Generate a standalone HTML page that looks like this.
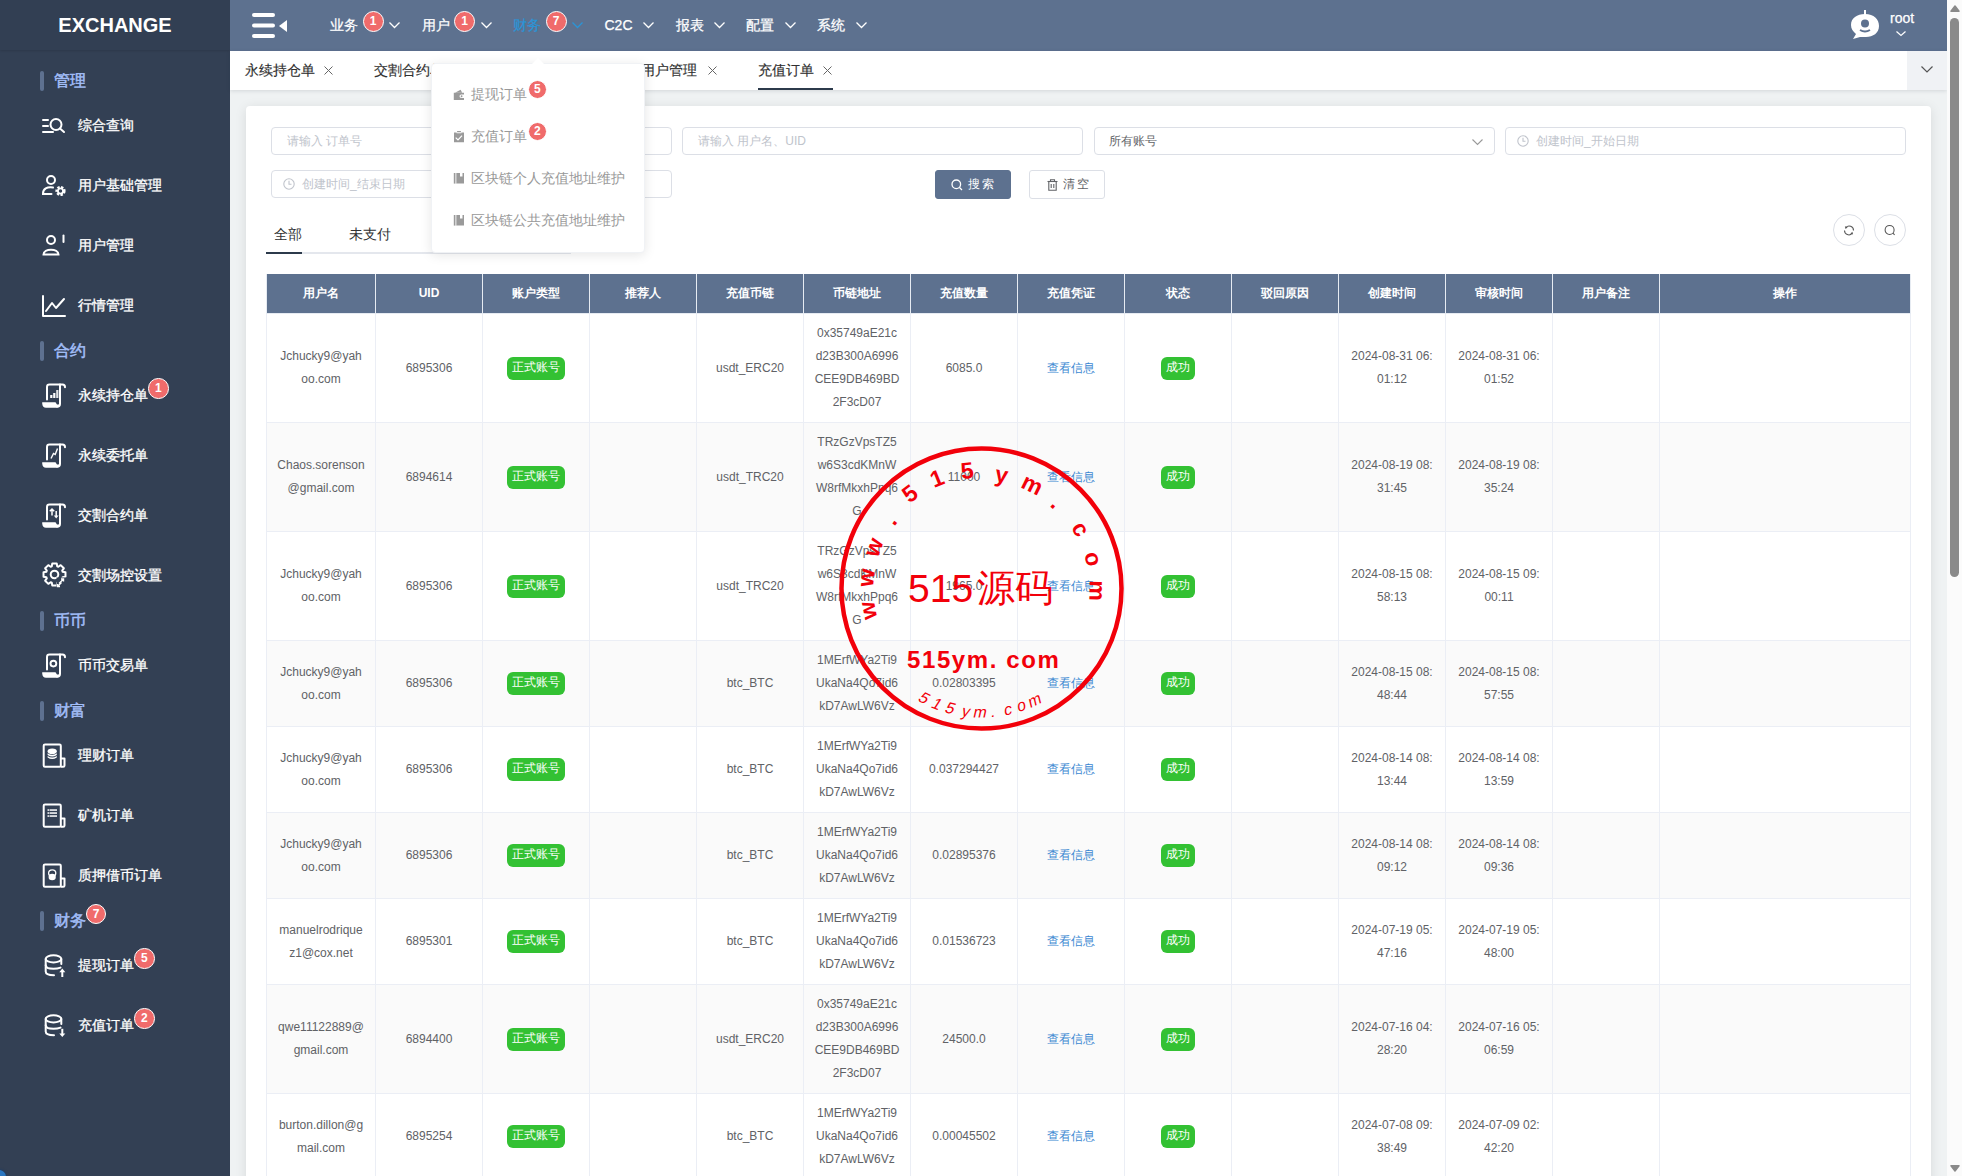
<!DOCTYPE html><html><head><meta charset="utf-8"><style>
*{box-sizing:border-box;margin:0;padding:0}
html,body{width:1962px;height:1176px;overflow:hidden;background:#eff2f3;font-family:"Liberation Sans",sans-serif;position:relative}
#side{position:absolute;left:0;top:0;width:230px;height:1176px;background:#334054;}
#logo{position:absolute;left:0;top:0;width:230px;height:50px;background:#323f53;box-shadow:0 1px 2px rgba(0,0,0,.12);color:#fff;font-weight:bold;font-size:20px;text-align:center;line-height:50px}
.sh{position:absolute;left:40px;width:120px;height:20px;color:#a0bcf8;font-size:16px;-webkit-text-stroke:0.5px #a3bff8;line-height:20px}
.sh:before{content:"";position:absolute;left:0;top:0;width:4px;height:20px;border-radius:2px;background:#5e7190}
.sh span{position:absolute;left:14px;top:0;white-space:nowrap}
.si{position:absolute;left:42px;width:180px;height:24px;color:#fff;font-size:14px;-webkit-text-stroke:0.3px #fff;line-height:24px;white-space:nowrap}
.si svg{position:absolute;left:0;top:0;overflow:visible}
.si span{position:absolute;left:36px;top:0}
.bdg{position:absolute;width:20px;height:20px;border-radius:50%;background:#f06b6b;border:1px solid #fff;color:#fff;font-size:12px;line-height:18px;text-align:center;font-weight:bold}
#hdr{position:absolute;left:230px;top:0;width:1717px;height:51px;background:#5d718f}
.nv{position:absolute;top:0;height:51px;color:#fff;font-size:14px;line-height:51px;white-space:nowrap;-webkit-text-stroke:0.25px currentColor}
.chev{position:absolute;overflow:visible}
#tabs{position:absolute;left:230px;top:51px;width:1717px;height:39px;background:#fff;box-shadow:0 1px 4px rgba(0,21,41,.12)}
.tb{position:absolute;top:0;height:39px;font-size:14px;color:#303030;line-height:39px;white-space:nowrap;-webkit-text-stroke:0.15px #303030}
#card{position:absolute;left:246px;top:106px;width:1685px;height:1100px;background:#fff;border-radius:4px;box-shadow:0 2px 12px 0 rgba(0,0,0,.1)}
#sb{position:absolute;left:1947px;top:0;width:15px;height:1176px;background:#fbfbfb}
.inp{position:absolute;height:28px;border:1px solid #dcdfe6;border-radius:4px;background:#fff;font-size:12px;color:#c0c4cc;line-height:27px;white-space:nowrap}
.btn{position:absolute;height:29px;border-radius:3px;font-size:12px;line-height:27px;text-align:center;letter-spacing:2px;white-space:nowrap}
.cbtn{position:absolute;width:32px;height:32px;border-radius:50%;border:1px solid #dcdfe6;background:#fff}
table{position:absolute;border-collapse:collapse;table-layout:fixed;font-size:12px;color:#606266}
td,th{border:1px solid #ebeef5;text-align:center;vertical-align:middle;word-break:break-all;line-height:23px}
th{background:#5d718f;color:#fff;font-weight:bold;height:39px;border-color:#e6ebf2;border-top:none}
td{padding:8px 10px}
tr.st td{background:#fafafa}
.tag{display:inline-block;height:23px;line-height:21px;padding:0 5px;border-radius:6px;background:#33c133;color:#fff;vertical-align:middle}
.lnk{color:#3d89d2}
.s1{position:relative;top:1px}
.m{display:inline-block;width:100%}
#dd{position:absolute;left:431px;top:63px;width:214px;height:190px;background:#fff;border-radius:4px;box-shadow:0 2px 12px rgba(0,0,0,.1);border:1px solid #f0f2f5}
.ddi{position:absolute;left:21px;height:20px;font-size:14px;color:#999;line-height:20px;white-space:nowrap}
</style></head><body>
<div id="side"><div id="logo">EXCHANGE</div>
<div class="sh" style="top:71px"><span>管理</span></div>
<div class="si" style="top:113px"><svg width="24" height="20" viewBox="0 0 24 20" style="top:4px"><g fill="none" stroke="#fff" stroke-width="2" stroke-linecap="round"><line x1="1" y1="3" x2="6" y2="3"/><line x1="1" y1="9" x2="6" y2="9"/><line x1="1" y1="15" x2="11" y2="15"/><circle cx="14" cy="7.5" r="5.5"/><line x1="18" y1="11.5" x2="22" y2="15"/></g></svg><span>综合查询</span></div>
<div class="si" style="top:173px"><svg width="24" height="22" viewBox="0 0 24 22" style="top:2px"><g fill="none" stroke="#fff" stroke-width="2" stroke-linecap="round"><circle cx="9" cy="5" r="4"/><path d="M11 12.5 C5 11.5 1 14 1 18.5 L1 19 L9.5 19"/></g><g transform="translate(18.5,16)"><circle r="3.8" fill="none" stroke="#fff" stroke-width="2.6" stroke-dasharray="2.2 1.4"/><circle r="2.6" fill="none" stroke="#fff" stroke-width="1.8"/></g></svg><span>用户基础管理</span></div>
<div class="si" style="top:233px"><svg width="24" height="22" viewBox="0 0 24 22" style="top:1px"><g fill="none" stroke="#fff" stroke-width="2" stroke-linecap="round"><circle cx="9" cy="6" r="4"/><path d="M1.5 20.5 C1.5 14 16.5 14 16.5 20.5 Z"/><line x1="21.5" y1="1.5" x2="21.5" y2="8"/></g></svg><span>用户管理</span></div>
<div class="si" style="top:293px"><svg width="24" height="22" viewBox="0 0 24 22" style="top:2px"><g fill="none" stroke="#fff" stroke-width="2" stroke-linecap="round" stroke-linejoin="round"><polyline points="1,1 1,21 23,21"/><polyline points="4,16 10,8 14,13 22,4"/></g></svg><span>行情管理</span></div>
<div class="sh" style="top:341px"><span>合约</span></div>
<div class="si" style="top:383px"><svg width="24" height="26" viewBox="0 0 24 26" style="top:0"><g fill="none" stroke="#fff" stroke-width="2" stroke-linecap="round"><path d="M5 16.5 V4 Q5 1.6 7.5 1.6 H20.5 Q23 1.6 23 4.3"/><path d="M18 1.6 V20.8 Q18 23.8 15 23.8"/></g><path d="M0.2 19.2 H13.5 L15 21.6 H17.2 V22 Q17 24.8 14 24.8 H4 Q0.6 24.8 0.2 20.5 Z" fill="#fff"/><g fill="#fff"><rect x="8.2" y="12" width="2.2" height="3"/><rect x="11.2" y="10" width="2.2" height="5"/><rect x="14.2" y="7" width="2.2" height="8" opacity=".85"/></g></svg><span>永续持仓单</span></div>
<div class="bdg" style="left:148.15px;top:378.45px;width:20.5px;height:20.5px;line-height:18.5px">1</div>
<div class="si" style="top:443px"><svg width="24" height="26" viewBox="0 0 24 26" style="top:0"><g fill="none" stroke="#fff" stroke-width="2" stroke-linecap="round"><path d="M5 16.5 V4 Q5 1.6 7.5 1.6 H20.5 Q23 1.6 23 4.3"/><path d="M18 1.6 V20.8 Q18 23.8 15 23.8"/></g><path d="M0.2 19.2 H13.5 L15 21.6 H17.2 V22 Q17 24.8 14 24.8 H4 Q0.6 24.8 0.2 20.5 Z" fill="#fff"/><polyline points="9,15.5 11.5,10.5 13.2,11.5 15.5,5.5" fill="none" stroke="#fff" stroke-width="1.4"/></svg><span>永续委托单</span></div>
<div class="si" style="top:503px"><svg width="24" height="26" viewBox="0 0 24 26" style="top:0"><g fill="none" stroke="#fff" stroke-width="2" stroke-linecap="round"><path d="M5 16.5 V4 Q5 1.6 7.5 1.6 H20.5 Q23 1.6 23 4.3"/><path d="M18 1.6 V20.8 Q18 23.8 15 23.8"/></g><path d="M0.2 19.2 H13.5 L15 21.6 H17.2 V22 Q17 24.8 14 24.8 H4 Q0.6 24.8 0.2 20.5 Z" fill="#fff"/><g fill="none" stroke="#fff" stroke-width="1.5"><path d="M10 12.5 V6 M7.8 8.2 L10 6 L12.2 8.2"/></g><path d="M14.2 8 V13" stroke="#fff" stroke-width="1.5"/><path d="M11.8 12.5 H16.6 L14.2 15.5Z" fill="#fff"/></svg><span>交割合约单</span></div>
<div class="si" style="top:563px"><svg width="26" height="26" viewBox="0 0 26 26" style="top:-1px"><path d="M20.66 9.77 L23.48 10.27 L23.48 14.73 L20.66 15.23 L20.20 16.34 L21.84 18.68 L18.68 21.84 L16.34 20.20 L15.23 20.66 L14.73 23.48 L10.27 23.48 L9.77 20.66 L8.66 20.20 L6.32 21.84 L3.16 18.68 L4.80 16.34 L4.34 15.23 L1.52 14.73 L1.52 10.27 L4.34 9.77 L4.80 8.66 L3.16 6.32 L6.32 3.16 L8.66 4.80 L9.77 4.34 L10.27 1.52 L14.73 1.52 L15.23 4.34 L16.34 4.80 L18.68 3.16 L21.84 6.32 L20.20 8.66Z" fill="none" stroke="#fff" stroke-width="2" stroke-linejoin="round"/><circle cx="12.5" cy="12.5" r="3.8" fill="none" stroke="#fff" stroke-width="2"/><rect x="14.5" y="15.5" width="12" height="11" fill="#334054"/><g stroke="#fff" stroke-width="1.4" fill="none"><path d="M17 21.5 L21.5 17 M19 17 H21.5 V19.5"/><path d="M15.5 24.5 L19.5 20.5 M15.5 22 V24.5 H18"/></g></svg><span>交割场控设置</span></div>
<div class="sh" style="top:611px"><span>币币</span></div>
<div class="si" style="top:653px"><svg width="24" height="26" viewBox="0 0 24 26" style="top:0"><g fill="none" stroke="#fff" stroke-width="2" stroke-linecap="round"><path d="M5 16.5 V4 Q5 1.6 7.5 1.6 H20.5 Q23 1.6 23 4.3"/><path d="M18 1.6 V20.8 Q18 23.8 15 23.8"/></g><path d="M0.2 19.2 H13.5 L15 21.6 H17.2 V22 Q17 24.8 14 24.8 H4 Q0.6 24.8 0.2 20.5 Z" fill="#fff"/><circle cx="11.4" cy="10.6" r="2.9" fill="none" stroke="#fff" stroke-width="1.9"/></svg><span>币币交易单</span></div>
<div class="sh" style="top:701px"><span>财富</span></div>
<div class="si" style="top:743px"><svg width="26" height="26" viewBox="0 0 26 26" style="top:0"><g fill="none" stroke="#fff" stroke-width="2" stroke-linejoin="round"><path d="M3 1.5 H17.5 Q18.8 1.5 18.8 2.8 V22.5 Q18.8 23.8 17.5 23.8 H3 Q1.7 23.8 1.7 22.5 V2.8 Q1.7 1.5 3 1.5 Z"/><path d="M18.8 15.5 H22.5 V22.5 Q22.5 23.8 21.2 23.8 H18.8"/></g><g fill="#fff"><ellipse cx="10.2" cy="8.2" rx="4.6" ry="2.8"/><path d="M5.6 10.2 Q10.2 13.2 14.8 10.2 V12 Q10.2 15 5.6 12Z"/><path d="M5.6 13 Q10.2 16 14.8 13 V14.5 Q10.2 17.5 5.6 14.5Z"/></g></svg><span>理财订单</span></div>
<div class="si" style="top:803px"><svg width="26" height="26" viewBox="0 0 26 26" style="top:0"><g fill="none" stroke="#fff" stroke-width="2" stroke-linejoin="round"><path d="M3 1.5 H17.5 Q18.8 1.5 18.8 2.8 V22.5 Q18.8 23.8 17.5 23.8 H3 Q1.7 23.8 1.7 22.5 V2.8 Q1.7 1.5 3 1.5 Z"/><path d="M18.8 15.5 H22.5 V22.5 Q22.5 23.8 21.2 23.8 H18.8"/></g><g fill="#fff"><rect x="5.5" y="6.3" width="1.5" height="1.5"/><rect x="5.5" y="9.3" width="1.5" height="1.5"/><rect x="5.5" y="12.3" width="1.5" height="1.5"/><rect x="7.5" y="6.3" width="7.5" height="1.5"/><rect x="7.5" y="9.3" width="7.5" height="1.5"/><rect x="7.5" y="12.3" width="7.5" height="1.5"/></g></svg><span>矿机订单</span></div>
<div class="si" style="top:863px"><svg width="26" height="26" viewBox="0 0 26 26" style="top:0"><g fill="none" stroke="#fff" stroke-width="2" stroke-linejoin="round"><path d="M3 1.5 H17.5 Q18.8 1.5 18.8 2.8 V22.5 Q18.8 23.8 17.5 23.8 H3 Q1.7 23.8 1.7 22.5 V2.8 Q1.7 1.5 3 1.5 Z"/><path d="M18.8 15.5 H22.5 V22.5 Q22.5 23.8 21.2 23.8 H18.8"/></g><g fill="#fff"><ellipse cx="10.2" cy="10" rx="3.6" ry="3.2" fill="none" stroke="#fff" stroke-width="1.3"/><ellipse cx="10.2" cy="14" rx="3.6" ry="3.2"/></g></svg><span>质押借币订单</span></div>
<div class="sh" style="top:911px"><span>财务</span></div>
<div class="bdg" style="left:85.75px;top:903.75px;width:20.5px;height:20.5px;line-height:18.5px">7</div>
<div class="si" style="top:953px"><svg width="24" height="26" viewBox="0 0 24 26" style="top:0"><g fill="none" stroke="#fff" stroke-width="2" stroke-linecap="round"><ellipse cx="11.5" cy="5.9" rx="7.8" ry="3.6"/><path d="M3.7 5.9 V18.5 Q3.7 22.2 12 22.2"/><path d="M3.7 12.3 Q3.7 15.8 11.5 15.8 Q15.5 15.8 18.5 14.6"/><path d="M19.3 5.9 V11"/></g><path d="M20.3 24 V18" stroke="#fff" stroke-width="2"/><path d="M17.3 19.2 L20.3 15.6 L23.3 19.2Z" fill="#fff"/></svg><span>提现订单</span></div>
<div class="bdg" style="left:134.15px;top:948.45px;width:20.5px;height:20.5px;line-height:18.5px">5</div>
<div class="si" style="top:1013px"><svg width="24" height="26" viewBox="0 0 24 26" style="top:0"><g fill="none" stroke="#fff" stroke-width="2" stroke-linecap="round"><ellipse cx="11.5" cy="5.9" rx="7.8" ry="3.6"/><path d="M3.7 5.9 V18.5 Q3.7 22.2 12 22.2"/><path d="M3.7 12.3 Q3.7 15.8 11.5 15.8 Q15.5 15.8 18.5 14.6"/><path d="M19.3 5.9 V11"/></g><path d="M20.3 15.8 V21" stroke="#fff" stroke-width="2"/><path d="M17.3 20.4 L20.3 24 L23.3 20.4Z" fill="#fff"/></svg><span>充值订单</span></div>
<div class="bdg" style="left:134.15px;top:1008.45px;width:20.5px;height:20.5px;line-height:18.5px">2</div>
<div style="position:absolute;left:-8px;top:1170px;width:14px;height:14px;border-radius:50%;background:#2a76c0;box-shadow:0 0 2px 1px rgba(20,60,110,.5)"></div>
</div>
<div id="hdr">
<svg style="position:absolute;left:22px;top:12px" width="36" height="28" viewBox="0 0 36 28"><g stroke="#fff" stroke-width="4" stroke-linecap="round"><line x1="2" y1="3" x2="21" y2="3"/><line x1="2" y1="13.5" x2="21" y2="13.5"/><line x1="2" y1="24" x2="21" y2="24"/></g><path d="M35 8 V20 L27 14 Z" fill="#fff"/></svg>
<div class="nv" style="left:100px;color:#fff">业务</div>
<div class="bdg" style="left:132.5px;top:11.3px;width:21px;height:21px;line-height:19px">1</div>
<svg class="chev" style="left:159px;top:21.5px" width="11" height="6" viewBox="0 0 11 6"><polyline points="0.5,0.5 5.5,5.5 10.5,0.5" fill="none" stroke="#fff" stroke-width="1.3"/></svg>
<div class="nv" style="left:191.5px;color:#fff">用户</div>
<div class="bdg" style="left:224.0px;top:11.3px;width:21px;height:21px;line-height:19px">1</div>
<svg class="chev" style="left:250.5px;top:21.5px" width="11" height="6" viewBox="0 0 11 6"><polyline points="0.5,0.5 5.5,5.5 10.5,0.5" fill="none" stroke="#fff" stroke-width="1.3"/></svg>
<div class="nv" style="left:283px;color:#2b94d6">财务</div>
<div class="bdg" style="left:315.5px;top:11.3px;width:21px;height:21px;line-height:19px">7</div>
<svg class="chev" style="left:342px;top:21.5px" width="11" height="6" viewBox="0 0 11 6"><polyline points="0.5,0.5 5.5,5.5 10.5,0.5" fill="none" stroke="#2b94d6" stroke-width="1.3"/></svg>
<div class="nv" style="left:374.5px;color:#fff">C2C</div>
<svg class="chev" style="left:413.0px;top:21.5px" width="11" height="6" viewBox="0 0 11 6"><polyline points="0.5,0.5 5.5,5.5 10.5,0.5" fill="none" stroke="#fff" stroke-width="1.3"/></svg>
<div class="nv" style="left:445.5px;color:#fff">报表</div>
<svg class="chev" style="left:484.0px;top:21.5px" width="11" height="6" viewBox="0 0 11 6"><polyline points="0.5,0.5 5.5,5.5 10.5,0.5" fill="none" stroke="#fff" stroke-width="1.3"/></svg>
<div class="nv" style="left:516px;color:#fff">配置</div>
<svg class="chev" style="left:554.5px;top:21.5px" width="11" height="6" viewBox="0 0 11 6"><polyline points="0.5,0.5 5.5,5.5 10.5,0.5" fill="none" stroke="#fff" stroke-width="1.3"/></svg>
<div class="nv" style="left:587px;color:#fff">系统</div>
<svg class="chev" style="left:625.5px;top:21.5px" width="11" height="6" viewBox="0 0 11 6"><polyline points="0.5,0.5 5.5,5.5 10.5,0.5" fill="none" stroke="#fff" stroke-width="1.3"/></svg>
<svg style="position:absolute;left:1620px;top:9px" width="32" height="32" viewBox="0 0 32 32"><line x1="15" y1="1" x2="15" y2="6" stroke="#fff" stroke-width="2"/><path d="M15 5 C24 5 29 10 29 17 C29 24 23 28 16 28 L10 28 L3 30 L6 25 C3 22 1 20 1 16 C1 9 7 5 15 5 Z" fill="#fff"/><circle cx="15" cy="14.5" r="4" fill="#5d718f"/><path d="M10 21 q5 3 10 0" stroke="#5d718f" stroke-width="2" fill="none"/></svg>
<div class="nv" style="left:1660px;top:-7px;font-size:14px">root</div>
<svg class="chev" style="left:1665.5px;top:31px" width="10" height="5" viewBox="0 0 10 5"><polyline points="0.5,0.5 5.0,4.5 9.5,0.5" fill="none" stroke="#fff" stroke-width="1.2"/></svg>
</div>
<div id="tabs">
<div class="tb" style="left:15px">永续持仓单</div>
<svg style="position:absolute;left:93.5px;top:15px" width="9" height="9" viewBox="0 0 9 9"><g stroke="#666" stroke-width="1"><line x1="0.5" y1="0.5" x2="8.5" y2="8.5"/><line x1="8.5" y1="0.5" x2="0.5" y2="8.5"/></g></svg>
<div class="tb" style="left:144px">交割合约单</div>
<svg style="position:absolute;left:222.5px;top:15px" width="9" height="9" viewBox="0 0 9 9"><g stroke="#666" stroke-width="1"><line x1="0.5" y1="0.5" x2="8.5" y2="8.5"/><line x1="8.5" y1="0.5" x2="0.5" y2="8.5"/></g></svg>
<div class="tb" style="left:272.5px">交割场控设置</div>
<svg style="position:absolute;left:365.0px;top:15px" width="9" height="9" viewBox="0 0 9 9"><g stroke="#666" stroke-width="1"><line x1="0.5" y1="0.5" x2="8.5" y2="8.5"/><line x1="8.5" y1="0.5" x2="0.5" y2="8.5"/></g></svg>
<div class="tb" style="left:411px">用户管理</div>
<svg style="position:absolute;left:477.5px;top:15px" width="9" height="9" viewBox="0 0 9 9"><g stroke="#666" stroke-width="1"><line x1="0.5" y1="0.5" x2="8.5" y2="8.5"/><line x1="8.5" y1="0.5" x2="0.5" y2="8.5"/></g></svg>
<div class="tb" style="left:528px">充值订单</div>
<svg style="position:absolute;left:592.5px;top:15px" width="9" height="9" viewBox="0 0 9 9"><g stroke="#666" stroke-width="1"><line x1="0.5" y1="0.5" x2="8.5" y2="8.5"/><line x1="8.5" y1="0.5" x2="0.5" y2="8.5"/></g></svg>
<div style="position:absolute;left:528px;top:37px;width:75px;height:2px;background:#2c3a4b"></div>
<div style="position:absolute;left:1677px;top:0;width:40px;height:39px;background:#f0f2f5"></div>
<svg class="chev" style="left:1691px;top:15px" width="12" height="6.5" viewBox="0 0 12 6.5"><polyline points="0.5,0.5 6.0,6.0 11.5,0.5" fill="none" stroke="#555" stroke-width="1.2"/></svg>
</div>
<div id="card"></div>
<div class="inp" style="left:271px;top:127px;width:401px"><span style="position:absolute;left:15px">请输入 订单号</span></div>
<div class="inp" style="left:682px;top:127px;width:401px"><span style="position:absolute;left:15px">请输入 用户名、UID</span></div>
<div class="inp" style="left:1094px;top:127px;width:401px;color:#606266"><span style="position:absolute;left:14px">所有账号</span></div>
<svg class="chev" style="left:1472px;top:138.5px" width="11" height="6" viewBox="0 0 11 6"><polyline points="0.5,0.5 5.5,5.5 10.5,0.5" fill="none" stroke="#999" stroke-width="1.1"/></svg>
<div class="inp" style="left:1505px;top:127px;width:401px"><span style="position:absolute;left:30px">创建时间_开始日期</span></div>
<svg style="position:absolute;left:1517px;top:135px" width="12" height="12" viewBox="0 0 12 12"><g fill="none" stroke="#c0c4cc" stroke-width="1.1"><circle cx="6" cy="6" r="5.2"/><polyline points="6,2.8 6,6.2 8.5,6.2"/></g></svg>
<div class="inp" style="left:271px;top:170px;width:401px"><span style="position:absolute;left:30px">创建时间_结束日期</span></div>
<svg style="position:absolute;left:283px;top:178px" width="12" height="12" viewBox="0 0 12 12"><g fill="none" stroke="#c0c4cc" stroke-width="1.1"><circle cx="6" cy="6" r="5.2"/><polyline points="6,2.8 6,6.2 8.5,6.2"/></g></svg>
<div class="btn" style="left:935px;top:170px;width:76px;background:#5d718f;color:#fff;border:1px solid #5d718f"><svg style="position:absolute;left:15px;top:8px" width="12" height="12" viewBox="0 0 12 12"><g fill="none" stroke="#fff" stroke-width="1.3"><circle cx="5.3" cy="5.3" r="4.3"/><line x1="8.5" y1="8.5" x2="11" y2="11"/></g></svg><span style="position:absolute;left:32px">搜索</span></div>
<div class="btn" style="left:1029px;top:170px;width:76px;background:#fff;color:#606266;border:1px solid #dcdfe6"><svg style="position:absolute;left:17px;top:8px" width="11" height="12" viewBox="0 0 11 12"><g fill="none" stroke="#606266" stroke-width="1.1"><line x1="0.5" y1="2.5" x2="10.5" y2="2.5"/><path d="M3.5 2.5 V0.8 H7.5 V2.5"/><path d="M1.8 2.5 V11.3 H9.2 V2.5"/><line x1="4.2" y1="5" x2="4.2" y2="9"/><line x1="6.8" y1="5" x2="6.8" y2="9"/></g></svg><span style="position:absolute;left:33px">清空</span></div>
<div style="position:absolute;left:266px;top:252px;width:305px;height:2px;background:#e4e7ed"></div>
<div style="position:absolute;left:266px;top:252px;width:36px;height:2px;background:#2c3a4b"></div>
<div style="position:absolute;left:274px;top:224px;font-size:14px;color:#303133;line-height:20px">全部</div>
<div style="position:absolute;left:349px;top:224px;font-size:14px;color:#303133;line-height:20px">未支付</div>
<div class="cbtn" style="left:1833px;top:214px"><svg style="position:absolute;left:9px;top:9px" width="12" height="12" viewBox="0 0 12 12"><g fill="none" stroke="#555" stroke-width="1.05"><path d="M2.9 3.6 A4.3 4.3 0 0 1 10.5 6.4"/><path d="M1.5 6.4 A4.3 4.3 0 0 0 9.1 9.3"/></g><path d="M1.9 2.2 L4.6 3.2 L2.6 5.1Z" fill="#555"/><path d="M10.1 10.6 L7.4 9.6 L9.4 7.7Z" fill="#555"/></svg></div>
<div class="cbtn" style="left:1874px;top:214px"><svg style="position:absolute;left:9px;top:9px" width="12" height="12" viewBox="0 0 12 12"><g fill="none" stroke="#555" stroke-width="1.05"><circle cx="5.6" cy="5.9" r="4.5"/><line x1="8.9" y1="9.2" x2="10.6" y2="10.9"/></g></svg></div>
<table style="left:266px;top:274px;width:1644px">
<colgroup><col style="width:109px"><col style="width:107px"><col style="width:107px"><col style="width:107px"><col style="width:107px"><col style="width:107px"><col style="width:107px"><col style="width:107px"><col style="width:107px"><col style="width:107px"><col style="width:107px"><col style="width:107px"><col style="width:107px"><col style="width:251px"></colgroup>
<tr><th>用户名</th><th>UID</th><th>账户类型</th><th>推荐人</th><th>充值币链</th><th>币链地址</th><th>充值数量</th><th>充值凭证</th><th>状态</th><th>驳回原因</th><th>创建时间</th><th>审核时间</th><th>用户备注</th><th>操作</th></tr>
<tr><td><span class="m">Jchucky9@yahoo.com</span></td><td><span class="x s1">6895306</span></td><td><span class="tag s1">正式账号</span></td><td></td><td><span class="x s1">usdt_ERC20</span></td><td>0x35749aE21cd23B300A6996CEE9DB469BD2F3cD07</td><td><span class="x s1">6085.0</span></td><td><span class="lnk s1">查看信息</span></td><td><span class="tag s1">成功</span></td><td></td><td><span class="m">2024-08-31 06:01:12</span></td><td><span class="m">2024-08-31 06:01:52</span></td><td></td><td></td></tr>
<tr class="st"><td><span class="m">Chaos.sorenson@gmail.com</span></td><td><span class="x s1">6894614</span></td><td><span class="tag s1">正式账号</span></td><td></td><td><span class="x s1">usdt_TRC20</span></td><td>TRzGzVpsTZ5w6S3cdKMnWW8rfMkxhPpq6G</td><td><span class="x s1">11000</span></td><td><span class="lnk s1">查看信息</span></td><td><span class="tag s1">成功</span></td><td></td><td><span class="m">2024-08-19 08:31:45</span></td><td><span class="m">2024-08-19 08:35:24</span></td><td></td><td></td></tr>
<tr><td><span class="m">Jchucky9@yahoo.com</span></td><td><span class="x s1">6895306</span></td><td><span class="tag s1">正式账号</span></td><td></td><td><span class="x s1">usdt_TRC20</span></td><td>TRzGzVpsTZ5w6S3cdKMnWW8rfMkxhPpq6G</td><td><span class="x s1">1965.0</span></td><td><span class="lnk s1">查看信息</span></td><td><span class="tag s1">成功</span></td><td></td><td><span class="m">2024-08-15 08:58:13</span></td><td><span class="m">2024-08-15 09:00:11</span></td><td></td><td></td></tr>
<tr class="st"><td><span class="m s1">Jchucky9@yahoo.com</span></td><td><span class="x">6895306</span></td><td><span class="tag">正式账号</span></td><td></td><td><span class="x">btc_BTC</span></td><td>1MErfWYa2Ti9UkaNa4Qo7id6kD7AwLW6Vz</td><td><span class="x">0.02803395</span></td><td><span class="lnk">查看信息</span></td><td><span class="tag">成功</span></td><td></td><td><span class="m s1">2024-08-15 08:48:44</span></td><td><span class="m s1">2024-08-15 08:57:55</span></td><td></td><td></td></tr>
<tr><td><span class="m s1">Jchucky9@yahoo.com</span></td><td><span class="x">6895306</span></td><td><span class="tag">正式账号</span></td><td></td><td><span class="x">btc_BTC</span></td><td>1MErfWYa2Ti9UkaNa4Qo7id6kD7AwLW6Vz</td><td><span class="x">0.037294427</span></td><td><span class="lnk">查看信息</span></td><td><span class="tag">成功</span></td><td></td><td><span class="m s1">2024-08-14 08:13:44</span></td><td><span class="m s1">2024-08-14 08:13:59</span></td><td></td><td></td></tr>
<tr class="st"><td><span class="m s1">Jchucky9@yahoo.com</span></td><td><span class="x">6895306</span></td><td><span class="tag">正式账号</span></td><td></td><td><span class="x">btc_BTC</span></td><td>1MErfWYa2Ti9UkaNa4Qo7id6kD7AwLW6Vz</td><td><span class="x">0.02895376</span></td><td><span class="lnk">查看信息</span></td><td><span class="tag">成功</span></td><td></td><td><span class="m s1">2024-08-14 08:09:12</span></td><td><span class="m s1">2024-08-14 08:09:36</span></td><td></td><td></td></tr>
<tr><td><span class="m s1">manuelrodriquez1@cox.net</span></td><td><span class="x">6895301</span></td><td><span class="tag">正式账号</span></td><td></td><td><span class="x">btc_BTC</span></td><td>1MErfWYa2Ti9UkaNa4Qo7id6kD7AwLW6Vz</td><td><span class="x">0.01536723</span></td><td><span class="lnk">查看信息</span></td><td><span class="tag">成功</span></td><td></td><td><span class="m s1">2024-07-19 05:47:16</span></td><td><span class="m s1">2024-07-19 05:48:00</span></td><td></td><td></td></tr>
<tr class="st"><td><span class="m">qwe11122889@gmail.com</span></td><td><span class="x s1">6894400</span></td><td><span class="tag s1">正式账号</span></td><td></td><td><span class="x s1">usdt_ERC20</span></td><td>0x35749aE21cd23B300A6996CEE9DB469BD2F3cD07</td><td><span class="x s1">24500.0</span></td><td><span class="lnk s1">查看信息</span></td><td><span class="tag s1">成功</span></td><td></td><td><span class="m">2024-07-16 04:28:20</span></td><td><span class="m">2024-07-16 05:06:59</span></td><td></td><td></td></tr>
<tr><td><span class="m s1">burton.dillon@gmail.com</span></td><td><span class="x">6895254</span></td><td><span class="tag">正式账号</span></td><td></td><td><span class="x">btc_BTC</span></td><td>1MErfWYa2Ti9UkaNa4Qo7id6kD7AwLW6Vz</td><td><span class="x">0.00045502</span></td><td><span class="lnk">查看信息</span></td><td><span class="tag">成功</span></td><td></td><td><span class="m s1">2024-07-08 09:38:49</span></td><td><span class="m s1">2024-07-09 02:42:20</span></td><td></td><td></td></tr>
</table>
<div id="dd">
<svg style="position:absolute;left:99px;top:-6px" width="14" height="7" viewBox="0 0 14 7"><path d="M0 7 L7 0 L14 7 Z" fill="#fff"/></svg>
<div style="position:absolute;left:20.5px;top:23px;width:12px;height:12px"><svg width="12" height="12" viewBox="0 0 12 12"><path d="M2 3.8 L7.6 0.7 L9.2 3.8Z" fill="#9a9a9a"/><path d="M0.8 3.8 H11 V5.5 H8.2 Q6.5 5.5 6.5 7.25 Q6.5 9 8.2 9 H11 V10.9 H0.8Z" fill="#9a9a9a"/><circle cx="8.6" cy="7.25" r="0.9" fill="#9a9a9a"/></svg></div>
<div class="ddi" style="left:38.5px;top:20px">提现订单</div>
<div class="bdg" style="left:95.79999999999995px;top:16.0px;width:19px;height:19px;line-height:17px">5</div>
<div style="position:absolute;left:20.5px;top:65px;width:12px;height:12px"><svg width="12" height="12" viewBox="0 0 12 12"><path d="M1 1.4 H3.6 V2.3 H8.4 V1.4 H11 V11.2 H1Z" fill="#9a9a9a"/><rect x="4" y="0" width="4" height="1.2" rx="0.5" fill="#9a9a9a"/><polyline points="2.7,6.7 5,9 9,4.7" fill="none" stroke="#fff" stroke-width="1.2"/></svg></div>
<div class="ddi" style="left:38.5px;top:62px">充值订单</div>
<div class="bdg" style="left:95.79999999999995px;top:58.0px;width:19px;height:19px;line-height:17px">2</div>
<div style="position:absolute;left:20.5px;top:107px;width:12px;height:12px"><svg width="12" height="12" viewBox="0 0 12 12"><rect x="0.8" y="0" width="1.3" height="10.6" fill="#9a9a9a"/><rect x="2.1" y="0" width="1.3" height="10.6" fill="#cfcfcf"/><path d="M3.4 0 H7 V3.5 H9.5 V0 H11 V10.6 H3.4Z" fill="#9a9a9a"/></svg></div>
<div class="ddi" style="left:38.5px;top:104px">区块链个人充值地址维护</div>
<div style="position:absolute;left:20.5px;top:149px;width:12px;height:12px"><svg width="12" height="12" viewBox="0 0 12 12"><rect x="0.8" y="0" width="1.3" height="10.6" fill="#9a9a9a"/><rect x="2.1" y="0" width="1.3" height="10.6" fill="#cfcfcf"/><path d="M3.4 0 H7 V3.5 H9.5 V0 H11 V10.6 H3.4Z" fill="#9a9a9a"/></svg></div>
<div class="ddi" style="left:38.5px;top:146px">区块链公共充值地址维护</div>
</div>
<div id="sb"><svg style="position:absolute;left:2.5px;top:5px" width="10" height="7" viewBox="0 0 10 7"><path d="M1 6.2 L5 1 L9 6.2Z" fill="#8a8a8a" stroke="#8a8a8a" stroke-width="1.5" stroke-linejoin="round"/></svg><div style="position:absolute;left:3px;top:18px;width:9px;height:559px;border-radius:4.5px;background:#8a8a8a"></div><svg style="position:absolute;left:2.5px;top:1165px" width="10" height="7" viewBox="0 0 10 7"><path d="M1 0.8 L5 6 L9 0.8Z" fill="#8a8a8a" stroke="#8a8a8a" stroke-width="1.5" stroke-linejoin="round"/></svg></div>
<svg style="position:absolute;left:0;top:0;pointer-events:none" width="1962" height="1176" viewBox="0 0 1962 1176"><circle cx="981.5" cy="588.6" r="140" fill="none" stroke="#f2000a" stroke-width="4.5"/><text x="0" y="0" transform="translate(867.6,610.7) rotate(259)" text-anchor="middle" dominant-baseline="central" font-family="Liberation Sans" font-weight="bold" font-size="23" fill="#f2000a">w</text><text x="0" y="0" transform="translate(866.0,577.5) rotate(275.5)" text-anchor="middle" dominant-baseline="central" font-family="Liberation Sans" font-weight="bold" font-size="23" fill="#f2000a">w</text><text x="0" y="0" transform="translate(873.2,547.0) rotate(291)" text-anchor="middle" dominant-baseline="central" font-family="Liberation Sans" font-weight="bold" font-size="23" fill="#f2000a">w</text><text x="0" y="0" transform="translate(889.7,519.4) rotate(307)" text-anchor="middle" dominant-baseline="central" font-family="Liberation Sans" font-weight="bold" font-size="23" fill="#f2000a">.</text><text x="0" y="0" transform="translate(909.9,493.6) rotate(323)" text-anchor="middle" dominant-baseline="central" font-family="Liberation Sans" font-weight="bold" font-size="23" fill="#f2000a">5</text><text x="0" y="0" transform="translate(936.9,478.3) rotate(338)" text-anchor="middle" dominant-baseline="central" font-family="Liberation Sans" font-weight="bold" font-size="23" fill="#f2000a">1</text><text x="0" y="0" transform="translate(967.0,470.5) rotate(353)" text-anchor="middle" dominant-baseline="central" font-family="Liberation Sans" font-weight="bold" font-size="23" fill="#f2000a">5</text><text x="0" y="0" transform="translate(1001.6,474.4) rotate(370)" text-anchor="middle" dominant-baseline="central" font-family="Liberation Sans" font-weight="bold" font-size="23" fill="#f2000a">y</text><text x="0" y="0" transform="translate(1032.4,484.3) rotate(386)" text-anchor="middle" dominant-baseline="central" font-family="Liberation Sans" font-weight="bold" font-size="23" fill="#f2000a">m</text><text x="0" y="0" transform="translate(1056.9,501.8) rotate(401)" text-anchor="middle" dominant-baseline="central" font-family="Liberation Sans" font-weight="bold" font-size="23" fill="#f2000a">.</text><text x="0" y="0" transform="translate(1080.9,528.9) rotate(419)" text-anchor="middle" dominant-baseline="central" font-family="Liberation Sans" font-weight="bold" font-size="23" fill="#f2000a">c</text><text x="0" y="0" transform="translate(1093.5,558.6) rotate(435)" text-anchor="middle" dominant-baseline="central" font-family="Liberation Sans" font-weight="bold" font-size="23" fill="#f2000a">o</text><text x="0" y="0" transform="translate(1097.5,590.6) rotate(451)" text-anchor="middle" dominant-baseline="central" font-family="Liberation Sans" font-weight="bold" font-size="23" fill="#f2000a">m</text><text x="0" y="0" transform="translate(924.7,697.7) rotate(27.5) skewX(-12)" text-anchor="middle" dominant-baseline="central" font-family="Liberation Sans" font-size="16" fill="#f2000a">5</text><text x="0" y="0" transform="translate(937.4,703.4) rotate(21) skewX(-12)" text-anchor="middle" dominant-baseline="central" font-family="Liberation Sans" font-size="16" fill="#f2000a">1</text><text x="0" y="0" transform="translate(950.7,707.7) rotate(14.5) skewX(-12)" text-anchor="middle" dominant-baseline="central" font-family="Liberation Sans" font-size="16" fill="#f2000a">5</text><text x="0" y="0" transform="translate(966.5,710.7) rotate(7) skewX(-12)" text-anchor="middle" dominant-baseline="central" font-family="Liberation Sans" font-size="16" fill="#f2000a">y</text><text x="0" y="0" transform="translate(980.4,711.6) rotate(0.5) skewX(-12)" text-anchor="middle" dominant-baseline="central" font-family="Liberation Sans" font-size="16" fill="#f2000a">m</text><text x="0" y="0" transform="translate(993.3,711.0) rotate(-5.5) skewX(-12)" text-anchor="middle" dominant-baseline="central" font-family="Liberation Sans" font-size="16" fill="#f2000a">.</text><text x="0" y="0" transform="translate(1008.1,708.7) rotate(-12.5) skewX(-12)" text-anchor="middle" dominant-baseline="central" font-family="Liberation Sans" font-size="16" fill="#f2000a">c</text><text x="0" y="0" transform="translate(1021.5,704.9) rotate(-19) skewX(-12)" text-anchor="middle" dominant-baseline="central" font-family="Liberation Sans" font-size="16" fill="#f2000a">o</text><text x="0" y="0" transform="translate(1034.5,699.6) rotate(-25.5) skewX(-12)" text-anchor="middle" dominant-baseline="central" font-family="Liberation Sans" font-size="16" fill="#f2000a">m</text><text x="908" y="602" font-family="Liberation Sans" font-size="39" fill="#f2000a">515</text><text x="977" y="601" font-family="Liberation Serif" font-size="38" fill="#f2000a">源码</text><text x="907" y="667.5" font-family="Liberation Sans" font-weight="bold" font-size="24" letter-spacing="1.6" fill="#f2000a">515ym. com</text></svg>
</body></html>
